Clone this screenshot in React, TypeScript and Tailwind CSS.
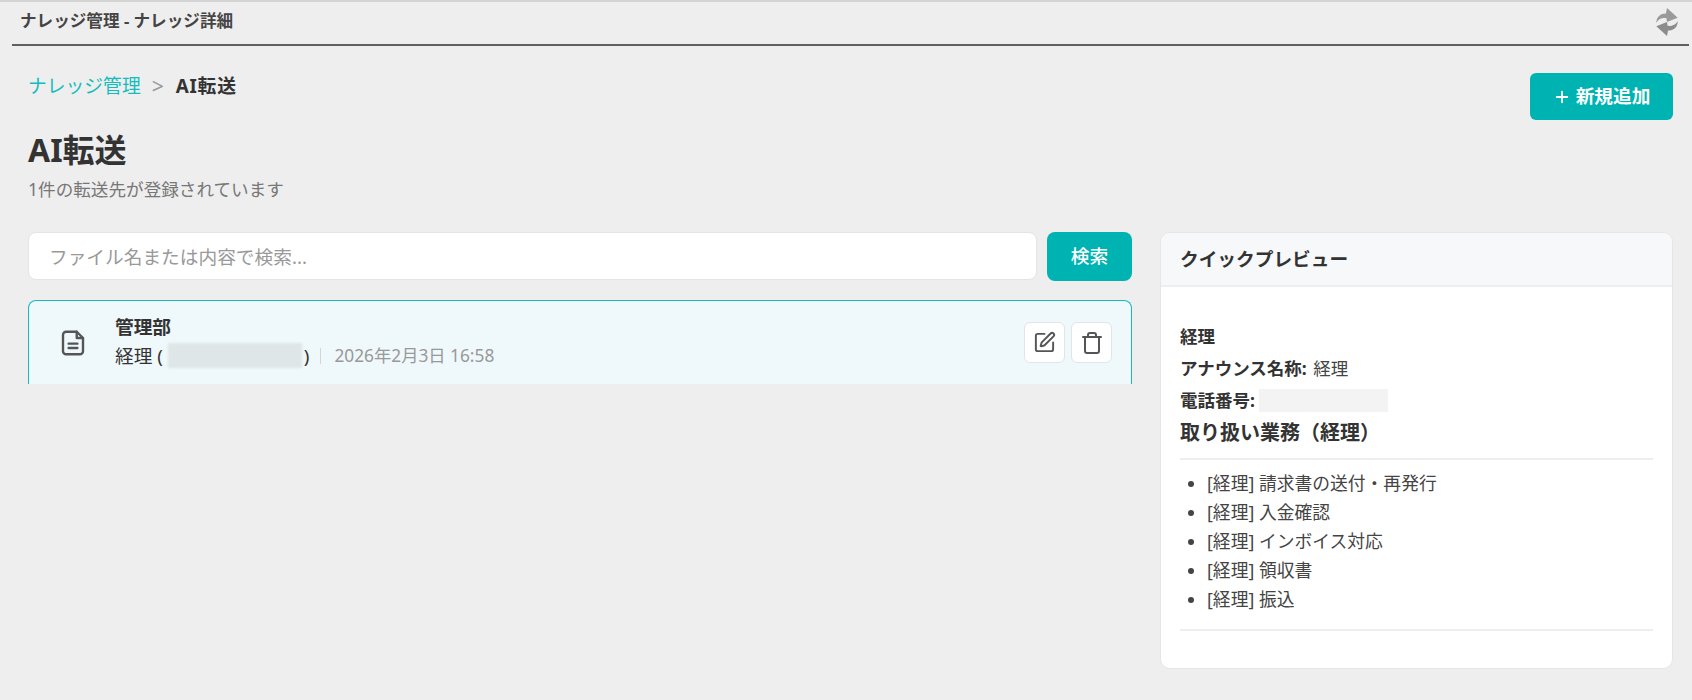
import { Plus, SquarePen, Trash } from "lucide-react"

const items = ["請求書の送付・再発行", "入金確認", "インボイス対応", "領収書", "振込"]

export default function App() {
  return (
    <div className="h-[700px] overflow-hidden bg-[#eeeeee] border-t-2 border-[#d4d4d4] text-[#333] font-['Noto_Sans','Noto_Sans_CJK_JP',sans-serif]">
      {/* Title bar */}
      <header className="ml-[12px] mr-[3px] h-[44px] border-b-2 border-[#606060] flex items-center justify-between pl-[8px] pb-[4px]">
        <span className="text-[16.6px] font-bold text-[#444]">ナレッジ管理 - ナレッジ詳細</span>
        <svg width="24" height="30" viewBox="0 0 22 28" className="mr-[10px] mt-[2px] blur-[0.4px]">
          <path d="M1 15 C1 9 5 6 10 6 L11 1 L21 10 L11 14 L10.500 10.500 C7 10 3 11 1 15Z" fill="#9a9a9a" />
          <path d="M21 13 C21 19 17 22 12 22 L11 27 L1 18 L11 14 L11.500 17.500 C15 18 19 17 21 13Z" fill="#8c8c8c" />
        </svg>
      </header>

      <main className="pl-[28px] pr-[19px]">
        <div className="flex justify-between items-start">
          <div>
            <nav className="mt-[26px] flex items-center text-[18.8px] leading-[28px]">
              <span className="text-[#14bdbd]">ナレッジ管理</span>
              <span className="ml-[11px] mr-[12px] text-[21px] text-[#999]">&gt;</span>
              <span className="font-bold text-[#333] tracking-[0.8px]">AI転送</span>
            </nav>
            <h1 className="mt-[28px] text-[32px] leading-[44px] font-bold text-[#333]">AI転送</h1>
            <p className="mt-[4px] text-[17.6px] leading-[26px] text-[#777]">1件の転送先が登録されています</p>
          </div>
          <button className="mt-[27px] w-[143px] h-[47px] rounded-[6px] bg-[#00b3b3] text-white text-[18.7px] font-bold flex items-center justify-center gap-[5px]">
            <Plus size={18} strokeWidth={2.5} />
            新規追加
          </button>
        </div>

        <div className="mt-[30px] flex gap-[28px] items-start">
          {/* Left column */}
          <div className="w-[1104px]">
            <div className="flex gap-[10px] items-start">
              <input
                readOnly
                placeholder="ファイル名または内容で検索..."
                className="w-[1009px] h-[48px] rounded-[8px] bg-white border border-[#e4e4e4] px-[20px] text-[18.7px] placeholder:text-[#999] outline-none"
              />
              <button className="w-[85px] h-[49px] rounded-[8px] bg-[#00b3b3] text-white text-[18.7px] font-medium">検索</button>
            </div>

            <div className="mt-[19px] h-[84px] rounded-t-[8px] bg-[#eff8fa] border border-b-0 border-[#14bdbd] flex items-center pl-[29px] pr-[19px]">
              <svg width="30" height="30" viewBox="0 0 24 24" fill="none" stroke="#555" strokeWidth="1.900" strokeLinecap="round" strokeLinejoin="round">
                <path d="M15 3H6.500a2.500 2.500 0 0 0-2.500 2.500v13a2.500 2.500 0 0 0 2.500 2.500h11a2.500 2.500 0 0 0 2.500-2.500V8z" />
                <path d="M15 3v5h5" />
                <path d="M8.500 12.500h7" />
                <path d="M8.500 16h7" />
              </svg>
              <div className="ml-[27px] mb-[2px] flex-1 min-w-0">
                <div className="text-[18.7px] leading-[26px] font-bold text-[#333]">管理部</div>
                <div className="mt-[2px] flex items-center text-[18.7px] leading-[28px]">
                  <span>経理 (</span>
                  <span className="ml-[5px] w-[134px] h-[25px] bg-[#dfe6e7] blur-[1px]" />
                  <span className="ml-[2px]">)</span>
                  <span className="ml-[11px] mr-[13px] h-[16px] border-l border-[#d5d5d5]" />
                  <span className="text-[17.3px] text-[#999]">2026年2月3日 16:58</span>
                </div>
              </div>
              <div className="flex gap-[6px]">
                <button className="w-[41px] h-[41px] rounded-[6px] bg-white border border-[#e4e4e4] flex items-center justify-center text-[#555]">
                  <SquarePen size={23} strokeWidth={2} />
                </button>
                <button className="w-[41px] h-[41px] rounded-[6px] bg-white border border-[#e4e4e4] flex items-center justify-center text-[#555]">
                  <Trash size={24} strokeWidth={2} />
                </button>
              </div>
            </div>
          </div>

          {/* Quick preview */}
          <aside className="w-[513px] h-[437px] rounded-[10px] bg-white border border-[#e6e6e6] overflow-hidden">
            <div className="h-[54px] bg-[#f6f8fa] border-b-2 border-[#eeeeee] flex items-center px-[19px] text-[18.7px] font-bold text-[#333]">
              クイックプレビュー
            </div>
            <div className="px-[19px] pt-[37px] text-[17.5px]">
              <div className="font-bold leading-[24px]">経理</div>
              <div className="mt-[8px] leading-[24px]">
                <span className="font-bold">アナウンス名称:</span> <span className="ml-[2px] text-[#444]">経理</span>
              </div>
              <div className="mt-[8px] flex items-center leading-[24px]">
                <span className="font-bold">電話番号:</span>
                <span className="ml-[4px] w-[129px] h-[23px] bg-[#f3f3f3] blur-[0.5px]" />
              </div>
              <div className="mt-[6px] text-[20px] leading-[30px] font-bold">取り扱い業務（経理）</div>
              <hr className="mt-[10px] border-t-2 border-[#eeeeee]" />
              <ul className="mt-[9px] list-disc pl-[27px]">
                {items.map((item) => (
                  <li key={item} className="text-[17.8px] leading-[29px] text-[#444]">[経理] {item}</li>
                ))}
              </ul>
              <hr className="mt-[15px] border-t-2 border-[#eeeeee]" />
            </div>
          </aside>
        </div>
      </main>
    </div>
  )
}
